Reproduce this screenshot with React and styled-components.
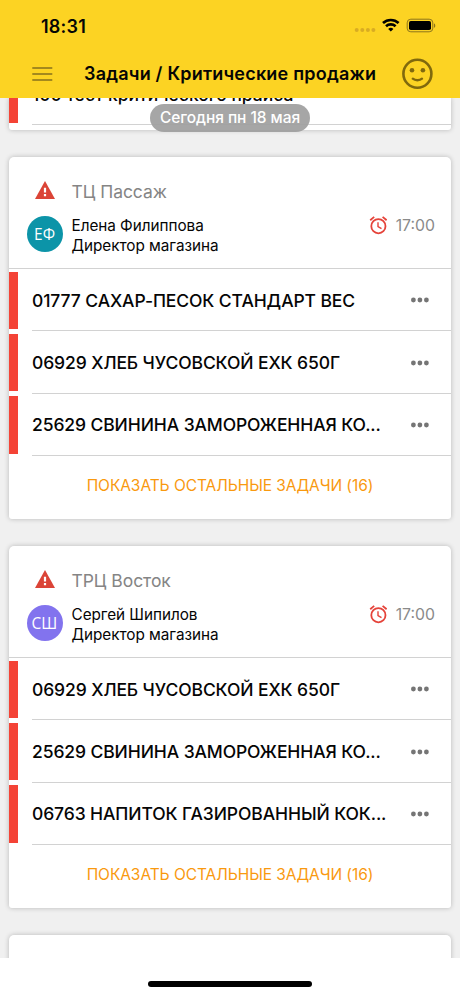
import React from "react";
import styled, { createGlobalStyle } from "styled-components";

const GlobalStyle = createGlobalStyle`
  * { box-sizing: border-box; }
  body { margin: 0; background: #fff; }
`;

const Screen = styled.div`
  display: flex;
  flex-direction: column;
  width: 460px;
  height: 996px;
  overflow: hidden;
  background: #fff;
  color: #050505;
  font-family: Inter, "Noto Sans", sans-serif;
`;

const Header = styled.header`
  flex: 0 0 98px;
  background: #fcd323;
`;

const StatusBar = styled.div`
  display: flex;
  align-items: center;
  height: 50px;
  padding: 2px 24px 0 41px;
`;

const Clock = styled.span`
  flex: 1;
  font-size: 18px;
  font-weight: 600;
  letter-spacing: 0.2px;
`;

const NavBar = styled.div`
  display: flex;
  align-items: center;
  height: 48px;
  padding: 0 27px 0 32px;
`;

const Title = styled.h1`
  flex: 1;
  margin: 0 0 0 31px;
  font-size: 18px;
  line-height: 24px;
  font-weight: 600;
  letter-spacing: 0.21px;
  white-space: nowrap;
`;

const Feed = styled.main`
  position: relative;
  flex: 0 0 860px;
  padding: 0 9px;
  overflow: hidden;
  background: #f0f0f0;
`;

const DatePill = styled.div`
  position: absolute;
  top: 6px;
  left: 150px;
  width: 160px;
  height: 28px;
  border-radius: 14px;
  background: rgba(158, 158, 158, 0.92);
  color: #fff;
  font-size: 15.5px;
  font-weight: 500;
  line-height: 28px;
  letter-spacing: -0.06px;
  text-align: center;
  white-space: nowrap;
`;

const Card = styled.section`
  width: 442px;
  height: ${(p) => p.$height}px;
  margin-bottom: 27px;
  border-radius: ${(p) => (p.$continued ? "0 0 3px 3px" : "5px 5px 3px 3px")};
  background: #fff;
  box-shadow: 0 0 5px rgba(0, 0, 0, 0.24);
`;

const CardHeader = styled.div`
  display: grid;
  grid-template-columns: 36px 1fr auto;
  grid-template-rows: 24px 40px;
  column-gap: 8.5px;
  row-gap: 0;
  height: 112px;
  padding: 23px 16px 0 18px;
  border-bottom: 1px solid #d2d2d2;
`;

const Alert = styled.svg`
  justify-self: center;
  width: 20px;
  height: 18px;
  margin-top: 0.5px;
`;

const Place = styled.h2`
  grid-column: 2 / 4;
  margin: 0;
  font-size: 17.5px;
  line-height: 24px;
  font-weight: 400;
  letter-spacing: -0.05px;
  color: #858585;
`;

const Avatar = styled.div`
  width: 36px;
  height: 36px;
  margin-top: 12px;
  border-radius: 50%;
  background: ${(p) => p.$color};
  color: #fff;
  font-family: "Open Sans", sans-serif;
  font-size: 15.5px;
  line-height: 36px;
  text-indent: -1px;
  text-align: center;
`;

const Person = styled.div`
  padding-top: 12px;
  font-size: 15.3px;
  line-height: 20px;
  letter-spacing: -0.04px;
  white-space: nowrap;
`;

const Deadline = styled.div`
  display: flex;
  align-items: center;
  gap: 9px;
  height: 20px;
  margin-top: 11px;
  font-size: 15.8px;
  color: #8a8a8a;
`;

const Row = styled.div`
  display: flex;
  height: 62.25px;
`;

const Stripe = styled.div`
  flex: 0 0 9px;
  height: 57.5px;
  margin: 2.5px 14px 0 0;
  background: #f44336;
`;

const RowBody = styled.div`
  display: flex;
  flex: 1;
  align-items: center;
  justify-content: space-between;
  padding: 1.5px 22px 0 0;
  border-bottom: 1px solid #d2d2d2;
`;

const TaskName = styled.span`
  font-size: 17.5px;
  font-weight: 500;
  letter-spacing: -0.1px;
  white-space: nowrap;
`;

const More = styled.svg`
  width: 18px;
  height: 6px;
  fill: #757575;
`;

const ShowAll = styled.button`
  display: block;
  width: 100%;
  height: 59px;
  padding: 0;
  border: 0;
  background: none;
  color: #f9990f;
  font-family: inherit;
  font-size: 15.5px;
  letter-spacing: -0.07px;
  white-space: nowrap;
`;

const ScrolledRow = styled.div`
  display: flex;
  height: 27px;
`;

const ScrolledStripe = styled.div`
  flex: 0 0 9px;
  height: 24.5px;
  margin-right: 14px;
  background: #f44336;
`;

const ScrolledBody = styled.div`
  flex: 1;
  border-bottom: 1px solid #d2d2d2;
`;

const ScrolledText = styled.div`
  margin-top: -14px;
  font-size: 17.5px;
  line-height: 22px;
  font-weight: 500;
  white-space: nowrap;
`;

const HomeArea = styled.footer`
  display: flex;
  justify-content: center;
  flex: 1;
  padding-top: 23px;
`;

const HomeIndicator = styled.div`
  width: 164px;
  height: 6px;
  border-radius: 3px;
  background: #000;
`;

const StatusIcons = () => (
  <svg width="82" height="18" viewBox="0 0 82 18">
    <g fill="#d9ac22">
      <circle cx="2.7" cy="13" r="2" />
      <circle cx="8.3" cy="13" r="2" />
      <circle cx="13.9" cy="13" r="2" />
      <circle cx="19.4" cy="13" r="2" />
    </g>
    <g fill="none" stroke="#000" strokeWidth="2.7">
      <path d="M29 6a11.6 11.6 0 0 1 15.6 0" />
      <path d="M32 9.3a7.2 7.2 0 0 1 9.6 0" />
    </g>
    <path d="M36.8 14.6l-2.6-2.6a3.8 3.8 0 0 1 5.2 0z" />
    <rect x="53.2" y="2.2" width="25.6" height="12.6" rx="3.6" fill="none" stroke="#8c741c" />
    <rect x="55" y="4" width="22" height="9" rx="1.8" />
    <path d="M80 6.4c1.7.5 1.7 3.9 0 4.4z" fill="#8c741c" />
  </svg>
);

const MenuIcon = () => (
  <svg width="21" height="16" viewBox="0 0 21 16" stroke="#a4891d" strokeWidth="2">
    <path d="M.3 2h20M.3 8h20M.3 14h20" />
  </svg>
);

const SmileIcon = () => (
  <svg width="31" height="32" viewBox="0 0 31 32" fill="none" stroke="#80690d">
    <circle cx="15.4" cy="15.8" r="14" strokeWidth="2.6" />
    <path d="M10.8 20.7c2.3 2 6.9 2 9.2 0" strokeWidth="2.4" strokeLinecap="round" />
    <g fill="#80690d" stroke="none">
      <circle cx="10" cy="12.2" r="2.3" />
      <circle cx="20.9" cy="12.2" r="2.3" />
    </g>
  </svg>
);

const AlertIcon = () => (
  <Alert viewBox="0 0 20 18">
    <path d="M10 0l10 18H0z" fill="#db4437" />
    <path d="M8.9 6.8h2.2v4.8H8.9zM8.9 13.1h2.2v2.2H8.9z" fill="#fff" />
  </Alert>
);

const AlarmIcon = () => (
  <svg width="18" height="19" viewBox="0 0 18 19" fill="none" stroke="#e5433a">
    <circle cx="9.4" cy="10.2" r="7.1" strokeWidth="1.8" />
    <path d="M1.2 4.2L5.2.9M17.6 4.2L13.6.9" strokeWidth="1.8" />
    <path d="M9 6.2v4.4l3.5 2.1" strokeWidth="1.4" />
  </svg>
);

const MoreIcon = () => (
  <More viewBox="0 0 18 6">
    <circle cx="2.4" cy="3" r="2.4" />
    <circle cx="8.9" cy="3" r="2.4" />
    <circle cx="15.4" cy="3" r="2.4" />
  </More>
);

const groups = [
  {
    place: "ТЦ Пассаж",
    name: "Елена Филиппова",
    initials: "ЕФ",
    color: "#0c94a8",
    tasks: ["01777 САХАР-ПЕСОК СТАНДАРТ ВЕС", "06929 ХЛЕБ ЧУСОВСКОЙ ЕХК 650Г", "25629 СВИНИНА ЗАМОРОЖЕННАЯ КО..."],
  },
  {
    place: "ТРЦ Восток",
    name: "Сергей Шипилов",
    initials: "СШ",
    color: "#8273ee",
    tasks: ["06929 ХЛЕБ ЧУСОВСКОЙ ЕХК 650Г", "25629 СВИНИНА ЗАМОРОЖЕННАЯ КО...", "06763 НАПИТОК ГАЗИРОВАННЫЙ КОК..."],
  },
];

const TaskGroup = ({ group }) => (
  <Card $height={362}>
    <CardHeader>
      <AlertIcon />
      <Place>{group.place}</Place>
      <Avatar $color={group.color}>{group.initials}</Avatar>
      <Person>
        <div>{group.name}</div>
        <div>Директор магазина</div>
      </Person>
      <Deadline>
        <AlarmIcon />
        17:00
      </Deadline>
    </CardHeader>
    {group.tasks.map((task) => (
      <Row key={task}>
        <Stripe />
        <RowBody>
          <TaskName>{task}</TaskName>
          <MoreIcon />
        </RowBody>
      </Row>
    ))}
    <ShowAll>ПОКАЗАТЬ ОСТАЛЬНЫЕ ЗАДАЧИ (16)</ShowAll>
  </Card>
);

export default function App() {
  return (
    <Screen>
      <GlobalStyle />
      <Header>
        <StatusBar>
          <Clock>18:31</Clock>
          <StatusIcons />
        </StatusBar>
        <NavBar>
          <MenuIcon />
          <Title>Задачи / Критические продажи</Title>
          <SmileIcon />
        </NavBar>
      </Header>
      <Feed>
        <Card $height={32} $continued>
          <ScrolledRow>
            <ScrolledStripe />
            <ScrolledBody>
              <ScrolledText>100 тест критического прайса</ScrolledText>
            </ScrolledBody>
          </ScrolledRow>
        </Card>
        {groups.map((group) => (
          <TaskGroup key={group.place} group={group} />
        ))}
        <Card $height={60} />
        <DatePill>Сегодня пн 18 мая</DatePill>
      </Feed>
      <HomeArea>
        <HomeIndicator />
      </HomeArea>
    </Screen>
  );
}
